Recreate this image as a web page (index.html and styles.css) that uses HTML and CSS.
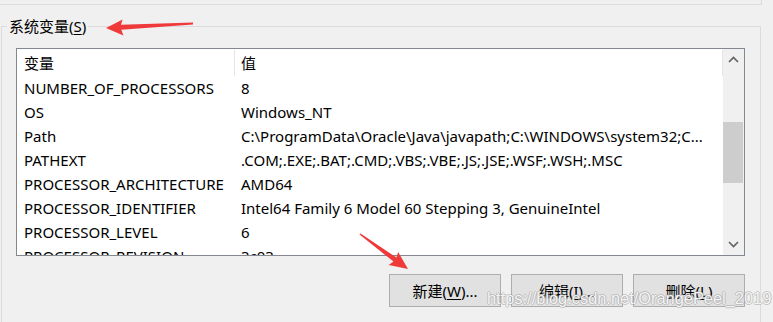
FILE: index.html
```html
<!DOCTYPE html>
<html lang="zh-CN">
<head>
<meta charset="utf-8">
<title>系统变量</title>
<link rel="stylesheet" href="styles.css">
</head>
<body>
<div class="window">
  <div class="prev-group"></div>
  <div class="group">
    <div class="group-title"><span>系统变量(<u>S</u>)</span></div>
    <div class="list">
      <div class="list-main">
        <div class="list-head">
          <div class="hcol hname">变量</div>
          <div class="hcol hvalue">值</div>
        </div>
        <div class="row"><div class="name">NUMBER_OF_PROCESSORS</div><div class="value">8</div></div>
        <div class="row"><div class="name">OS</div><div class="value">Windows_NT</div></div>
        <div class="row"><div class="name">Path</div><div class="value">C:\ProgramData\Oracle\Java\javapath;C:\WINDOWS\system32;C...</div></div>
        <div class="row"><div class="name">PATHEXT</div><div class="value">.COM;.EXE;.BAT;.CMD;.VBS;.VBE;.JS;.JSE;.WSF;.WSH;.MSC</div></div>
        <div class="row"><div class="name">PROCESSOR_ARCHITECTURE</div><div class="value">AMD64</div></div>
        <div class="row"><div class="name">PROCESSOR_IDENTIFIER</div><div class="value">Intel64 Family 6 Model 60 Stepping 3, GenuineIntel</div></div>
        <div class="row"><div class="name">PROCESSOR_LEVEL</div><div class="value">6</div></div>
        <div class="row"><div class="name">PROCESSOR_REVISION</div><div class="value">3c03</div></div>
      </div>
      <div class="scrollbar">
        <div class="sb-btn">
          <svg width="11" height="7" viewBox="0 0 11 7"><path d="M1 6 L5.5 1.5 L10 6" fill="none" stroke="#606060" stroke-width="1.6"/></svg>
        </div>
        <div class="sb-track"><div class="sb-thumb"></div></div>
        <div class="sb-btn">
          <svg width="11" height="7" viewBox="0 0 11 7"><path d="M1 1 L5.5 5.5 L10 1" fill="none" stroke="#606060" stroke-width="1.6"/></svg>
        </div>
      </div>
    </div>
    <div class="buttons">
      <div class="btn">新建(<u>W</u>)...</div>
      <div class="btn">编辑(<u>I</u>)...</div>
      <div class="btn">删除(<u>L</u>)</div>
    </div>
  </div>
  <svg class="arrows" width="773" height="322" viewBox="0 0 773 322">
    <polygon points="106,28 122.6,19.5 121,24.8 193,22.6 193,24.4 121.3,29.8 123.4,35.5" fill="#f03a3a"/>
    <polygon points="408,269 398.1,251.9 396.5,257.6 360.5,233.4 359.5,234.6 393.5,261.6 388.7,264.9" fill="#f03a3a"/>
  </svg>
  <div class="watermark">https://blog.csdn.net/OrangePeel_2019</div>
</div>
</body>
</html>
```
FILE: styles.css
```css
html, body {
  margin: 0;
  padding: 0;
}
body {
  background: #f0f0f0;
  font-family: "Noto Sans", "Noto Sans CJK SC", sans-serif;
  font-size: 15px;
  color: #000;
}
.window {
  position: relative;
  width: 773px;
  height: 322px;
  overflow: hidden;
}
.prev-group {
  width: 761px;
  height: 4px;
  border-right: 1px solid #dcdcdc;
  border-bottom: 1px solid #dcdcdc;
}
.group {
  margin-top: 21px;
  margin-left: 1px;
  width: 744px;
  height: 400px;
  padding-left: 14px;
  border: 1px solid #dcdcdc;
  border-bottom: none;
}
.group-title {
  height: 20px;
  line-height: 20px;
  margin-top: -11px;
  padding-left: 5px;
  margin-left: -14px;
}
.group-title span {
  background: #f0f0f0;
  padding: 0 2px;
}
u {
  text-decoration-thickness: 1px;
  text-underline-offset: 2px;
}
.list {
  margin-top: 12px;
  width: 727px;
  height: 206px;
  border: 1px solid #828790;
  background: #fff;
  display: flex;
}
.list-main {
  width: 706px;
  overflow: hidden;
}
.list-head {
  display: flex;
  height: 27px;
  line-height: 27px;
}
.hcol {
  box-sizing: border-box;
  height: 26px;
  margin-top: 1px;
  line-height: 26px;
  border-right: 1px solid #e5e5e5;
}
.hname {
  width: 218px;
  padding-left: 7px;
}
.hvalue {
  width: 488px;
  padding-left: 6px;
}
.row {
  display: flex;
  height: 24px;
  line-height: 24px;
  white-space: nowrap;
}
.name {
  width: 218px;
  box-sizing: border-box;
  padding-left: 7px;
  overflow: hidden;
}
.value {
  flex: 1;
  padding-left: 6px;
  overflow: hidden;
}
.scrollbar {
  width: 21px;
  background: #f0f0f0;
  display: flex;
  flex-direction: column;
}
.sb-btn {
  height: 21px;
  display: flex;
  align-items: center;
  justify-content: center;
}
.sb-track {
  flex: 1;
  padding-top: 52px;
}
.sb-thumb {
  width: 20px;
  height: 61px;
  background: #cdcdcd;
}
.buttons {
  width: 729px;
  margin-top: 18px;
  display: flex;
  justify-content: flex-end;
  gap: 10px;
}
.btn {
  box-sizing: border-box;
  width: 112px;
  height: 33px;
  border: 1px solid #adadad;
  background: #e1e1e1;
  display: flex;
  align-items: center;
  justify-content: center;
}
.arrows {
  position: absolute;
  left: 0;
  top: 0;
  pointer-events: none;
}
.watermark {
  position: absolute;
  left: 487px;
  top: 289px;
  font-family: "Liberation Sans", Arial, sans-serif;
  font-size: 16.4px;
  color: rgba(255, 255, 255, 0.9);
  text-shadow: 1px 0 0 rgba(150, 150, 150, 0.45), -1px 0 0 rgba(150, 150, 150, 0.45), 0 1px 0 rgba(150, 150, 150, 0.45), 0 -1px 0 rgba(150, 150, 150, 0.45);
  white-space: nowrap;
  pointer-events: none;
}
```
